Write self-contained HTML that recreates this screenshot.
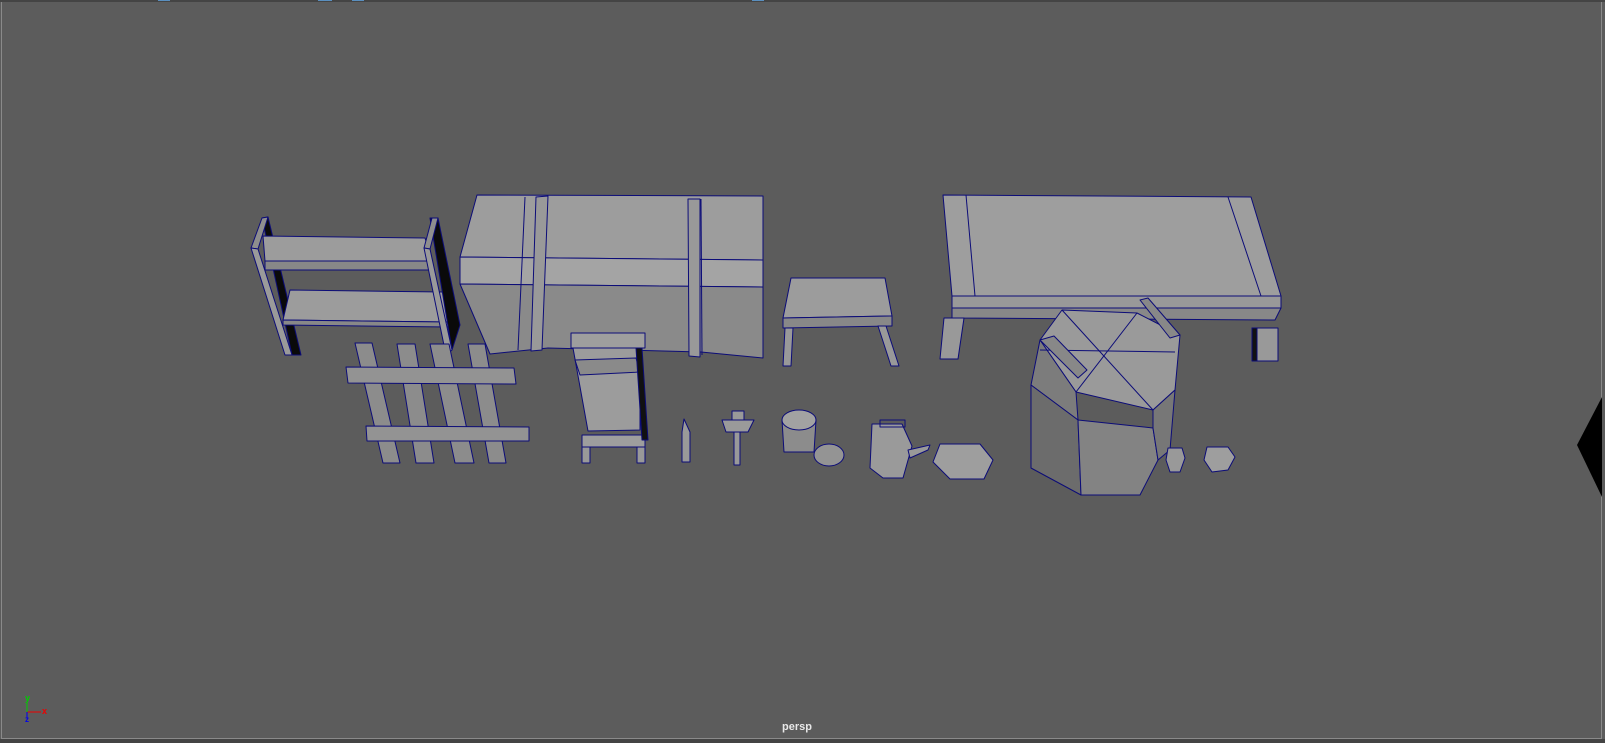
<!DOCTYPE html>
<html><head><meta charset="utf-8"><style>
html,body{margin:0;padding:0;background:#5c5c5c;width:1605px;height:743px;overflow:hidden}
svg{display:block}
text{font-family:"Liberation Sans",sans-serif}
</style></head><body>
<svg width="1605" height="743" viewBox="0 0 1605 743" xmlns="http://www.w3.org/2000/svg">
<rect width="1605" height="743" fill="#5c5c5c"/>
<rect x="0" y="0" width="1605" height="2" fill="#444"/>
<rect x="158" y="0" width="12" height="1" fill="#5a8fbf"/>
<rect x="318" y="0" width="14" height="1" fill="#5a8fbf"/>
<rect x="352" y="0" width="12" height="1" fill="#5a8fbf"/>
<rect x="752" y="0" width="12" height="1" fill="#5a8fbf"/>
<rect x="1" y="2" width="1" height="737" fill="#8a8a8a"/>
<rect x="1601" y="2" width="1" height="737" fill="#8a8a8a"/>
<rect x="1" y="738" width="1601" height="1" fill="#8a8a8a"/>
<rect x="0" y="739" width="1605" height="4" fill="#444"/>

<g stroke="#0c0c78" stroke-width="1" stroke-linejoin="round">
<polygon points="262,218 268,217 301,355 292,355" fill="#0a0a0a"/>
<polygon points="251,248 262,218 268,217 258,249" fill="#8e8e8e"/>
<polygon points="251,248 258,249 292,355 285,355" fill="#9a9a9a"/>
<polygon points="263,236 425,238 432,261 265,261" fill="#9c9c9c"/>
<polygon points="265,261 432,261 433,270 265,270" fill="#888"/>
<polygon points="290,290 443,292 448,322 283,320" fill="#9c9c9c"/>
<polygon points="283,320 448,322 448,327 283,325" fill="#888"/>
<polygon points="430,218 438,218 460,325 452,350" fill="#0a0a0a"/>
<polygon points="424,248 432,218 438,218 430,249" fill="#8e8e8e"/>
<polygon points="424,248 430,249 452,350 446,355" fill="#9a9a9a"/>
<polygon points="477,195 763,196 763,260 460,257" fill="#9d9d9d"/>
<polygon points="460,257 763,260 763,287 460,284" fill="#a4a4a4"/>
<polygon points="460,284 763,287 763,358 701,352 548,348 490,354" fill="#8a8a8a"/>
<polygon points="536,197 548,196 542,350 531,351" fill="#999"/>
<polygon points="688,199 700,199 700,357 689,356" fill="#999"/>
<line x1="525" y1="197" x2="518" y2="350"/>
<line x1="701" y1="199" x2="702" y2="355"/>
<polygon points="355,343 372,343 400,463 383,463" fill="#8c8c8c"/>
<polygon points="397,344 415,344 434,463 416,463" fill="#8c8c8c"/>
<polygon points="430,344 449,344 474,463 455,463" fill="#8c8c8c"/>
<polygon points="468,344 485,344 506,463 489,463" fill="#8c8c8c"/>
<polygon points="346,367 514,368 516,384 348,383" fill="#939393"/>
<polygon points="366,426 529,427 529,441 367,441" fill="#939393"/>
<polygon points="571,333 645,333 645,348 571,348" fill="#9e9e9e"/>
<polygon points="573,348 640,348 640,430 588,431" fill="#9c9c9c"/>
<polygon points="575,360 636,358 640,372 580,375" fill="#8a8a8a"/>
<polygon points="582,435 645,435 645,447 582,447" fill="#9e9e9e"/>
<polygon points="582,447 590,447 590,463 582,463" fill="#999"/>
<polygon points="637,447 645,447 645,463 637,463" fill="#999"/>
<polygon points="636,348 642,348 648,440 642,440" fill="#111"/>
<polygon points="791,278 885,278 892,316 783,318" fill="#9c9c9c"/>
<polygon points="783,318 892,316 892,326 783,328" fill="#888"/>
<polygon points="785,328 793,328 791,366 783,366" fill="#999"/>
<polygon points="878,326 886,326 899,366 891,366" fill="#999"/>
<polygon points="943,195 1251,197 1281,296 952,296" fill="#9e9e9e"/>
<polygon points="952,296 1281,296 1281,308 952,308" fill="#999"/>
<polygon points="952,308 1281,308 1275,320 952,318" fill="#888"/>
<polygon points="944,318 964,318 958,359 940,359" fill="#999"/>
<polygon points="1252,328 1278,328 1278,361 1255,361" fill="#999"/>
<line x1="966" y1="195" x2="975" y2="296"/>
<line x1="1228" y1="197" x2="1261" y2="296"/>
<polygon points="1252,328 1257,328 1257,361 1252,361" fill="#111"/>
<polygon points="1062,310 1137,313 1180,335 1175,390 1153,410 1076,392 1040,340" fill="#9a9a9a"/>
<polygon points="1040,340 1076,392 1078,420 1031,385" fill="#7c7c7c"/>
<polygon points="1031,385 1078,420 1081,495 1031,468" fill="#6c6c6c"/>
<polygon points="1078,420 1153,428 1158,460 1140,495 1081,495" fill="#838383"/>
<polygon points="1153,410 1175,390 1170,450 1158,460 1153,428" fill="#777"/>
<line x1="1062" y1="310" x2="1153" y2="410"/>
<line x1="1137" y1="313" x2="1076" y2="392"/>
<line x1="1040" y1="350" x2="1175" y2="352"/>
<polygon points="1040,340 1054,336 1087,370 1078,378" fill="#888"/>
<polygon points="1140,300 1148,298 1180,335 1170,338" fill="#888"/>
<polygon points="684,419 690,432 690,462 682,462 682,432" fill="#999"/>
<polygon points="732,411 744,411 744,432 732,432" fill="#999"/>
<polygon points="722,420 754,420 748,432 726,432" fill="#9a9a9a"/>
<polygon points="734,432 740,432 740,465 734,465" fill="#999"/>
<polygon points="782,420 816,420 814,452 784,452" fill="#8c8c8c"/>
<ellipse cx="799" cy="420" rx="17" ry="10" fill="#a2a2a2"/>
<ellipse cx="829" cy="455" rx="15" ry="11" fill="#949494"/>
<polygon points="872,424 902,424 912,446 903,478 883,478 870,468" fill="#9a9a9a"/>
<polygon points="880,420 905,420 905,427 880,427" fill="none"/>
<polygon points="908,450 930,445 928,450 910,458" fill="#999"/>
<polygon points="940,444 980,444 993,460 984,479 950,479 933,462" fill="#9e9e9e"/>
<polygon points="1168,448 1182,448 1185,458 1180,472 1170,472 1166,460" fill="#999"/>
<polygon points="1207,447 1228,447 1235,457 1228,470 1212,472 1204,460" fill="#9e9e9e"/>
</g>
<polygon points="1602,397 1577,445 1602,497" fill="#000"/>
<line x1="27" y1="712" x2="41" y2="712" stroke="#e00" stroke-width="1"/>
<line x1="27" y1="703" x2="27" y2="712" stroke="#0c0" stroke-width="1"/>
<line x1="27" y1="712" x2="27" y2="718" stroke="#00e" stroke-width="1"/>
<text x="42" y="714" fill="#e00" font-size="9" font-weight="bold">x</text>
<text x="25" y="701" fill="#0c0" font-size="9" font-weight="bold">y</text>
<text x="25" y="722" fill="#00e" font-size="8" font-weight="bold">z</text>
<text x="782" y="730" fill="#e8e8e8" font-size="11" font-weight="bold">persp</text>
</svg>
</body></html>
